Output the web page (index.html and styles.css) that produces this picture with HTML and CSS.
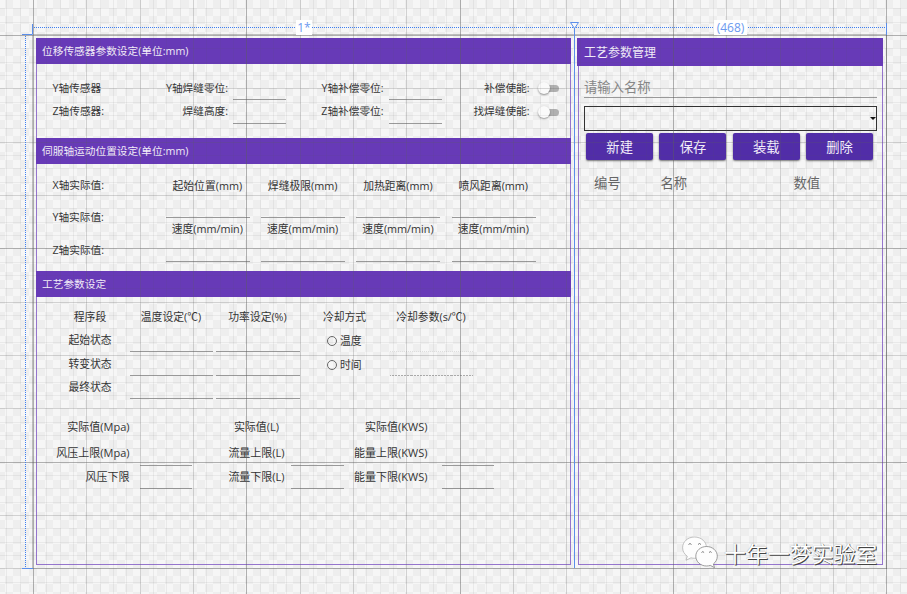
FILE: index.html
```html
<!DOCTYPE html>
<html lang="zh-CN">
<head>
<meta charset="utf-8">
<title>工艺参数</title>
<link rel="stylesheet" href="styles.css">
</head>
<body>
<main class="surface">
  <section class="panel settings">
    <h2 class="bar">位移传感器参数设定(单位:mm)</h2>
    <div class="sensors">
      <span>Y轴传感器</span><span class="end">Y轴焊缝零位:</span><i class="field"></i><span class="end">Y轴补偿零位:</span><i class="field"></i><span class="end">补偿使能:</span><i class="toggle"></i>
      <span>Z轴传感器:</span><span class="end">焊缝高度:</span><i class="field"></i><span class="end">Z轴补偿零位:</span><i class="field"></i><span class="end">找焊缝使能:</span><i class="toggle"></i>
    </div>
    <h2 class="bar">伺服轴运动位置设定(单位:mm)</h2>
    <div class="servo">
      <div class="axes"><span>X轴实际值:</span><span>Y轴实际值:</span><span>Z轴实际值:</span></div>
      <div class="positions">
        <div class="stack"><span>起始位置(mm)</span><i class="field"></i><span>速度(mm/min)</span><i class="field"></i></div>
        <div class="stack"><span>焊缝极限(mm)</span><i class="field"></i><span>速度(mm/min)</span><i class="field"></i></div>
        <div class="stack"><span>加热距离(mm)</span><i class="field"></i><span>速度(mm/min)</span><i class="field"></i></div>
        <div class="stack"><span>喷风距离(mm)</span><i class="field"></i><span>速度(mm/min)</span><i class="field"></i></div>
      </div>
    </div>
    <h2 class="bar">工艺参数设定</h2>
    <div class="process">
      <span>程序段</span><span>温度设定(℃)</span><span>功率设定(%)</span><span>冷却方式</span><span>冷却参数(s/℃)</span>
      <span>起始状态</span><i class="field"></i><i class="field"></i><label class="radio"><i></i>温度</label><i class="field faint"></i>
      <span>转变状态</span><i class="field"></i><i class="field"></i><label class="radio"><i></i>时间</label><i class="field dotted"></i>
      <span>最终状态</span><i class="field"></i><i class="field"></i>
    </div>
    <div class="limits">
      <span class="end">实际值(Mpa)</span><i></i><span class="mid">实际值(L)</span><i></i><span class="end">实际值(KWS)</span><i></i>
      <span class="end">风压上限(Mpa)</span><i class="field"></i><span class="mid">流量上限(L)</span><i class="field"></i><span class="end">能量上限(KWS)</span><i class="field"></i>
      <span class="end">风压下限</span><i class="field"></i><span class="mid">流量下限(L)</span><i class="field"></i><span class="end">能量下限(KWS)</span><i class="field"></i>
    </div>
  </section>
  <section class="panel manager">
    <h2 class="bar">工艺参数管理</h2>
    <div class="name">请输入名称</div>
    <div class="combo"><i></i></div>
    <div class="actions"><button>新建</button><button>保存</button><button>装载</button><button>删除</button></div>
    <div class="columns"><span>编号</span><span>名称</span><span>数值</span></div>
  </section>
</main>
<svg class="grid" id="grid" width="907" height="594" shape-rendering="crispEdges"></svg>
<svg class="adorner" width="907" height="594" fill="none" stroke="#5b8eea">
  <path d="M34 27.500H886M25.500 36V567" stroke="#3f7ff0" stroke-dasharray="1 1"/>
  <path d="M22 34.500H32.500V24M22 568.500H33M886.500 23V35M574.500 28V568"/>
  <path d="M570.500 22.500H578.500L574.500 28.500Z" fill="#f8f8f8"/>
</svg>
<span class="size star">1*</span>
<span class="size fixed">(468)</span>
<div class="watermark">
  <svg width="38" height="34" viewBox="0 0 38 34" fill="#fdfdfd" stroke="#aaa" stroke-width=".7">
    <path d="M12.500 1C5.700 1 .6 5.800.6 11.700c0 3.500 1.800 6.600 4.700 8.500L4 24.300l5-2.500c1.200.3 2.300.5 3.500.5 6.800 0 12-4.700 12-10.600S19.300 1 12.500 1Z"/>
    <path d="M24.500 10.500c-6 0-10.700 4.300-10.700 9.700s4.700 9.800 10.700 9.800c1.300 0 2.600-.2 3.800-.6l4.200 2.200-1.100-3.700c2.400-1.800 3.900-4.600 3.900-7.700 0-5.400-4.800-9.700-10.800-9.700Z" stroke="#777"/>
    <path d="M6.500 8.500q1.500-2 3 0M16 8.500q1.500-2 3 0M19.500 16.500q1.300-1.700 2.600 0M27 16.500q1.300-1.700 2.600 0" fill="none" stroke="#444"/>
  </svg>
  <span>十年一梦实验室</span>
</div>
<script src="grid.js"></script>
</body>
</html>
```
FILE: styles.css
```css
* { box-sizing: border-box; }
body {
  margin: 0;
  width: 907px;
  height: 594px;
  overflow: hidden;
  position: relative;
  background: repeating-conic-gradient(#eeeeee 0 25%, #f6f6f6 0 50%) 13px 0 / 16px 16px;
  font: 10.800px/16px "Open Sans", "Noto Sans CJK SC", sans-serif;
  color: #333;
}
i { display: block; font-style: normal; }
span, label { white-space: nowrap; }
.surface { display: flex; gap: 7px; padding: 38px 0 0 36px; }
.panel { height: 527px; border: 1px solid #9575cd; border-top: 0; }
.settings { width: 535px; }
.manager { width: 305px; }
.bar {
  margin: 0 -1px;
  height: 26px;
  padding-left: 6px;
  background: #673ab7;
  color: #f1ecf8;
  font-size: 10.700px;
  font-weight: 400;
  line-height: 26px;
}
.field { height: 20px; border-bottom: 1px solid #999; }
.end { text-align: right; }
.mid { text-align: center; }

.sensors {
  display: grid;
  grid-template-columns: 100px 75.500px 58px 97.500px 59px 87px 30px;
  grid-template-rows: 24px 24px;
  height: 73.500px;
  padding: 16px 0 0 15.500px;
  font-size: 10.670px;
}
.sensors span:nth-child(n + 8) { line-height: 15px; }
.sensors .field { margin-left: 5px; width: 53px; }
.toggle {
  width: 20px;
  height: 7px;
  margin: 5px 0 0 9.500px;
  border-radius: 4px;
  background: #b0b0b0;
}
.toggle::before {
  content: "";
  display: block;
  width: 12px;
  height: 12px;
  border-radius: 50%;
  background: #fafafa;
  box-shadow: 0 1px 2px #0006;
  transform: translate(-1px, -3px);
}

.servo { display: flex; height: 107px; padding-left: 15.500px; }
.axes { display: flex; flex-direction: column; gap: 16.600px; width: 113.300px; padding-top: 13px; font-size: 10.670px; }
.positions { display: grid; grid-template-columns: repeat(4, 84px); gap: 11.330px; padding-top: 14px; }
.stack { display: flex; flex-direction: column; text-align: center; }
.stack span { margin-left: -1px; }
.stack .field { height: 24px; }
.stack .field + span { margin-top: 3px; }
.stack .field:last-child { height: 25px; }

.process {
  display: grid;
  grid-template-columns: 75px 83px 84px 84px 83px;
  column-gap: 3px;
  grid-template-rows: 23px 24px 23.500px 24px;
  padding: 12px 0 0 15px;
  text-align: center;
}
.process > span { margin-left: -1px; }
.process > span:nth-child(5n + 1) { margin-left: 1px; }
.process .radio { display: flex; align-items: center; gap: 3px; padding-left: 24px; height: 18px; }
.radio i { width: 10px; height: 10px; border: 1.300px solid #666; border-radius: 50%; }
.process .dotted { border-bottom: 1px dashed #999; border-image: repeating-linear-gradient(90deg, #aaa 0 2px, transparent 2px 3px) 1; }
.process .faint { border-bottom: 1px dotted #ddd; }

.limits {
  display: grid;
  grid-template-columns: 77px 62.500px 99px 53px 83.500px 67px;
  grid-template-rows: 26px 24px 24px;
  padding: 16px 0 0 15.500px;
  font-size: 11px;
}
.limits .end { justify-self: end; }
.limits .mid { padding-left: 30px; }
.limits .field { width: 52px; height: 21px; }
.limits .field:nth-child(n + 13) { height: 20px; }
.limits .end + .field { margin-left: 10.500px; }
.limits .field:nth-child(6n) { margin-left: 14.500px; }
.limits .mid + .field { width: 53px; }

.manager .bar { height: 27.500px; margin-left: -2px; padding-left: 7px; font-size: 12px; line-height: 29px; }
.name { height: 32px; margin: 0 5px; border-bottom: 1px solid #999; color: #888; font-size: 13.330px; line-height: 42px; }
.combo { display: flex; justify-content: flex-end; align-items: center; height: 25px; margin: 8.500px 5px 2px; border: 1px solid #333; }
.combo i { border: 3px solid transparent; border-top: 3px solid #111; border-bottom: 0; }
.actions { display: flex; gap: 6.300px; padding-left: 7.200px; }
.actions button {
  width: 67px;
  height: 27px;
  padding: 0;
  border: 0;
  border-radius: 2px;
  background: #512da8;
  box-shadow: 0 1px 2px #0008;
  color: #f3effa;
  font: 13.330px/29px "Open Sans", "Noto Sans CJK SC", sans-serif;
}
.columns {
  display: grid;
  grid-template-columns: 66.500px 133px 1fr;
  height: 41px;
  margin-left: 5px;
  padding: 13px 0 0 10px;
  border-bottom: 1px solid #e3e3e3;
  color: #666;
  font-size: 13.330px;
  line-height: 20px;
}

.grid, .adorner { position: absolute; inset: 0; pointer-events: none; }
.size {
  position: absolute;
  top: 20px;
  height: 15px;
  background: #fff;
  color: #6b9aef;
  font-size: 12px;
  line-height: 15px;
  text-align: center;
}
.star { left: 296px; width: 16px; }
.fixed { left: 714px; width: 33px; }
.watermark {
  position: absolute;
  left: 682px;
  top: 536px;
  display: flex;
  align-items: center;
  gap: 4px;
  color: #fff;
  font: 21.900px/34px "Noto Sans CJK SC", sans-serif;
  text-shadow: 1px 1px 0 #444, 0 0 1px #888;
}
```
FILE: grid.js
```js
const svg = document.getElementById("grid");
function line(x, y, w, h, opacity) {
  const r = document.createElementNS("http://www.w3.org/2000/svg", "rect");
  const values = { x, y, width: w, height: h, fill: "#5c5c5c", "fill-opacity": opacity };
  for (const key in values) r.setAttribute(key, values[key]);
  svg.appendChild(r);
}
// Weight depends on the step: every 4th line is stronger, every 16th strongest.
function weight(n) {
  return n % 16 === 0 ? 0.46 : n % 4 === 0 ? 0.24 : 0.08;
}
for (let n = -3; n < 67; n++) {
  line(Math.round(33 + n * 40 / 3), 0, 1, 594, weight(n));
  line(0, Math.round(35 + n * 40 / 3), 907, 1, weight(n));
}
line(32, 35, 1, 534, 0.35);
line(886, 35, 1, 534, 0.45);
line(33, 34, 854, 1, 0.35);
line(33, 568, 854, 1, 0.35);
```
